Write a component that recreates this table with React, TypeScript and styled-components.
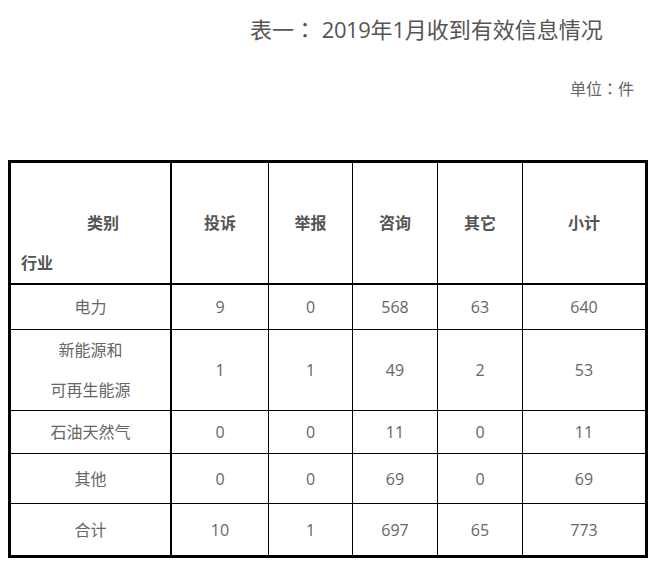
import React from "react";
import styled, { createGlobalStyle } from "styled-components";

const GlobalStyle = createGlobalStyle`
  html, body {
    margin: 0;
    padding: 0;
    background: #ffffff;
  }
  body {
    font-family: "Open Sans", "Noto Sans CJK SC", sans-serif;
  }
`;

const Page = styled.div`
  width: 658px;
  display: flex;
  flex-direction: column;
`;

const Title = styled.h1`
  margin: 0;
  padding: 14px 0 0 250px;
  height: 30px;
  font-size: 22px;
  line-height: 30px;
  font-weight: normal;
  color: #555555;
  white-space: nowrap;
  overflow: visible;
`;

const TitleNum = styled.span`
  letter-spacing: -0.4px;
`;

const Punct = styled.span`
  font-family: "Noto Sans CJK JP", "Noto Sans CJK SC", sans-serif;
  line-height: 1;
`;

const Unit = styled.div`
  margin-top: 33px;
  padding-right: 24px;
  height: 24px;
  text-align: right;
  font-size: 16px;
  line-height: 24px;
  color: #666666;
`;

const Table = styled.table`
  margin: 59px 0 0 8px;
  width: 640px;
  table-layout: fixed;
  border-collapse: separate;
  border-spacing: 0;
  border-left: 3px solid #000;
  border-top: 3px solid #000;
  font-size: 16px;
`;

const Cell = styled.td<{ $w?: number; $h?: number; $first?: boolean; $last?: boolean; $bottom?: "thin" | "mid" | "thick" }>`
  box-sizing: border-box;
  padding: 0;
  ${(p) => (p.$w ? `width: ${p.$w}px;` : "")}
  ${(p) => (p.$h ? `height: ${p.$h}px;` : "")}
  border-right: ${(p) => (p.$first ? 2 : p.$last ? 3 : 1)}px solid #000;
  border-bottom: ${(p) => (p.$bottom === "thick" ? 3 : p.$bottom === "mid" ? 2 : 1)}px solid #000;
  text-align: center;
  vertical-align: middle;
  color: #666666;
  line-height: 40px;
`;

const HeadCell = styled(Cell).attrs({ as: "th" })`
  font-weight: bold;
  color: #555555;
`;

const CornerCell = styled(HeadCell)`
  vertical-align: top;
  text-align: left;
  padding-top: 40px;
`;

const CornerLine = styled.div<{ $indent: number }>`
  padding-left: ${(p) => p.$indent}px;
  line-height: 40px;
`;

const Line = styled.div`
  line-height: 40px;
`;

const widths = [161, 97, 84, 85, 85, 125];
const heads = ["投诉", "举报", "咨询", "其它", "小计"];

type Row = { name: string[]; values: number[]; h: number };

const rows: Row[] = [
  { name: ["电力"], values: [9, 0, 568, 63, 640], h: 45 },
  { name: ["新能源和", "可再生能源"], values: [1, 1, 49, 2, 53], h: 81 },
  { name: ["石油天然气"], values: [0, 0, 11, 0, 11], h: 43 },
  { name: ["其他"], values: [0, 0, 69, 0, 69], h: 50 },
  { name: ["合计"], values: [10, 1, 697, 65, 773], h: 54 },
];

export default function App() {
  return (
    <Page>
      <GlobalStyle />
      <Title>
        表一<Punct>：</Punct> <TitleNum>2019</TitleNum>年<TitleNum>1</TitleNum>月收到有效信息情况
      </Title>
      <Unit>
        单位<Punct>：</Punct>件
      </Unit>
      <Table>
        <thead>
          <tr>
            <CornerCell $w={widths[0]} $h={121} $first $bottom="mid">
              <CornerLine $indent={76}>类别</CornerLine>
              <CornerLine $indent={10}>行业</CornerLine>
            </CornerCell>
            {heads.map((h, i) => (
              <HeadCell key={h} $w={widths[i + 1]} $h={121} $last={i === heads.length - 1} $bottom="mid">
                {h}
              </HeadCell>
            ))}
          </tr>
        </thead>
        <tbody>
          {rows.map((r, ri) => {
            const bottom = ri === rows.length - 1 ? "thick" : "thin";
            return (
              <tr key={r.name.join("")}>
                <Cell $h={r.h} $first $bottom={bottom}>
                  {r.name.map((n) => (
                    <Line key={n}>{n}</Line>
                  ))}
                </Cell>
                {r.values.map((v, vi) => (
                  <Cell key={vi} $h={r.h} $last={vi === r.values.length - 1} $bottom={bottom}>
                    {v}
                  </Cell>
                ))}
              </tr>
            );
          })}
        </tbody>
      </Table>
    </Page>
  );
}
